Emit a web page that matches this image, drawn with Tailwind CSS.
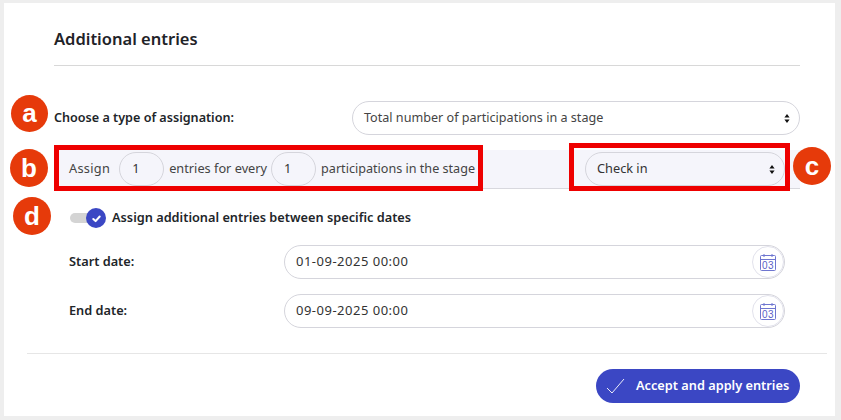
<!DOCTYPE html>
<html lang="en">
<head>
  <meta charset="UTF-8">
  <title>Additional entries</title>
  <script src="https://cdn.jsdelivr.net/npm/@tailwindcss/browser@4"></script>
</head>
<body class="bg-[#eeeeee] font-['Noto_Sans',sans-serif] text-[#212529] overflow-hidden">

  <div class="relative w-[841px] h-[420px] pt-[3px] pl-[4px]">
    <!-- Card -->
    <div class="w-[831px] h-[413px] bg-white">
      <div class="pl-[50px] pr-[35px]">
        <div class="h-[63px] border-b border-[#d8d8d8] flex items-center pt-[10px]">
          <h2 class="text-[16.5px] font-semibold text-[#1f2328]">Additional entries</h2>
        </div>

        <!-- Type of assignation -->
        <div class="flex items-center justify-between mt-[35px]">
          <label class="text-[12.6px] font-semibold">Choose a type of assignation:</label>
          <div class="w-[448px] h-[34px] rounded-full border border-[#d5d5dc] flex items-center justify-between pl-[11px] pr-[9px] text-[12.6px] text-[#444]">
            <span>Total number of participations in a stage</span>
            <svg width="6" height="9" viewBox="0 0 6 9" fill="#111"><path d="M3 0l2.6 3.4H.4zM3 9L.4 5.6h5.2z"/></svg>
          </div>
        </div>

        <!-- Assign row -->
        <div class="flex items-center h-[39px] mt-[15px] bg-[#f5f5fb] border-b border-[#d8d8de] pl-[15px] pr-[15px] text-[12.75px] text-[#444]">
          <span class="tracking-[0.3px]">Assign</span>
          <div class="w-[45px] h-[34px] ml-[9px] rounded-full border border-[#d5d5dc] flex items-center pl-[12px] text-[#333]">1</div>
          <span class="ml-[5px]">entries for every</span>
          <div class="w-[45px] h-[34px] ml-[4px] rounded-full border border-[#d5d5dc] flex items-center pl-[12px] text-[#333]">1</div>
          <span class="ml-[5px] text-[12.6px]">participations in the stage</span>
          <div class="w-[200px] h-[34px] ml-auto rounded-full border border-[#d5d5dc] flex items-center justify-between pl-[11px] pr-[9px] text-[#333]">
            <span>Check in</span>
            <svg width="6" height="9" viewBox="0 0 6 9" fill="#111"><path d="M3 0l2.6 3.4H.4zM3 9L.4 5.6h5.2z"/></svg>
          </div>
        </div>

        <!-- Toggle -->
        <div class="flex items-center mt-[19px] pl-[16px]">
          <div class="relative w-[36px] h-[20px]">
            <div class="absolute left-0 top-[5px] w-[26px] h-[10px] rounded-full bg-[#d4d4d4]"></div>
            <div class="absolute left-[16px] top-0 w-[20px] h-[20px] rounded-full bg-[#3b47c4] flex items-center justify-center">
              <svg width="11" height="11" viewBox="0 0 12 12" fill="none" stroke="white" stroke-width="2.2" stroke-linecap="round" stroke-linejoin="round"><path d="M2.5 6.5l2.5 2.3 4.5-5"/></svg>
            </div>
          </div>
          <span class="ml-[6px] text-[12.75px] font-semibold">Assign additional entries between specific dates</span>
        </div>

        <!-- Dates -->
        <div class="flex items-center mt-[17px] pl-[15px] pr-[15px]">
          <label class="w-[215px] text-[12.75px] font-semibold">Start date:</label>
          <div class="flex-1 h-[34px] rounded-full border border-[#d5d5dc] flex items-center justify-between pl-[11px] text-[13px] tracking-[0.5px] text-[#333]">
            <span>01-09-2025 00:00</span>
            <div class="w-[32px] h-[32px] rounded-full border border-[#e2e2ec] flex items-center justify-center">
              <svg width="18" height="19" viewBox="0 0 18 19" fill="none" stroke="#6f76d0" stroke-width="1"><rect x="1.5" y="2.5" width="15" height="15" rx="1"/><path d="M1.5 6.5h15M5 1v3M13 1v3"/><text x="9" y="15.7" text-anchor="middle" font-size="10" stroke="none" fill="#5a62c8" font-family="Liberation Sans">03</text></svg>
            </div>
          </div>
        </div>
        <div class="flex items-center mt-[15px] pl-[15px] pr-[15px]">
          <label class="w-[215px] text-[12.75px] font-semibold">End date:</label>
          <div class="flex-1 h-[34px] rounded-full border border-[#d5d5dc] flex items-center justify-between pl-[11px] text-[13px] tracking-[0.5px] text-[#333]">
            <span>09-09-2025 00:00</span>
            <div class="w-[32px] h-[32px] rounded-full border border-[#e2e2ec] flex items-center justify-center">
              <svg width="18" height="19" viewBox="0 0 18 19" fill="none" stroke="#6f76d0" stroke-width="1"><rect x="1.5" y="2.5" width="15" height="15" rx="1"/><path d="M1.5 6.5h15M5 1v3M13 1v3"/><text x="9" y="15.7" text-anchor="middle" font-size="10" stroke="none" fill="#5a62c8" font-family="Liberation Sans">03</text></svg>
            </div>
          </div>
        </div>
      </div>

      <!-- Footer -->
      <div class="mt-[25px] ml-[23px] mr-[8px] border-t border-[#e6e6e6] pt-[15px] pr-[27px] flex justify-end">
        <button class="w-[204px] h-[34px] rounded-full bg-[#3b47c4] text-white text-[12.75px] font-semibold flex items-center pl-[10px]">
          <svg width="20" height="16" viewBox="0 0 20 16" fill="none" stroke="white" stroke-width="0.9"><path d="M1 10l5 5L18 1"/></svg>
          <span class="ml-[10px]">Accept and apply entries</span>
        </button>
      </div>
    </div>

    <!-- Annotations -->
    <div class="absolute left-[54px] top-[145px] w-[429px] h-[46px] border-[5px] border-[#ee0000]"></div>
    <div class="absolute left-[569px] top-[143px] w-[221px] h-[48px] border-[5px] border-[#ee0000]"></div>
    <div class="absolute left-[11px] top-[95px] w-[37px] h-[37px] rounded-full bg-[#e63a0a] text-white font-['Liberation_Sans',sans-serif] font-bold text-[26px] flex items-center justify-center">a</div>
    <div class="absolute left-[10px] top-[149px] w-[38px] h-[38px] rounded-full bg-[#e63a0a] text-white font-['Liberation_Sans',sans-serif] font-bold text-[26px] flex items-center justify-center">b</div>
    <div class="absolute left-[793px] top-[147px] w-[38px] h-[38px] rounded-full bg-[#e63a0a] text-white font-['Liberation_Sans',sans-serif] font-bold text-[26px] flex items-center justify-center">c</div>
    <div class="absolute left-[13px] top-[197px] w-[38px] h-[38px] rounded-full bg-[#e63a0a] text-white font-['Liberation_Sans',sans-serif] font-bold text-[26px] flex items-center justify-center">d</div>
  </div>

</body>
</html>
